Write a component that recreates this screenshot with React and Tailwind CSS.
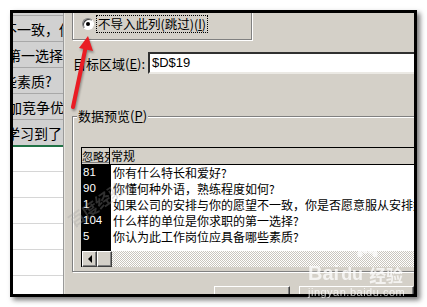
import React from "react";

const cjk = { fontFamily: '"Noto Sans CJK SC", "Noto Sans", sans-serif' };

const sheetRows = [
  { text: "不一致，你", cls: "-ml-[10px]" },
  { text: "第一选择", cls: "-ml-[6px]" },
  { text: "些素质?", cls: "-ml-[10px]" },
  { text: "加竞争优", cls: "-ml-[5px]" },
  { text: "学习到了", cls: "-ml-[7px]" },
];

const preview = [
  ["81", "你有什么特长和爱好?"],
  ["90", "你懂何种外语，熟练程度如何?"],
  ["1", "如果公司的安排与你的愿望不一致，你是否愿意服从安排好"],
  ["104", "什么样的单位是你求职的第一选择?"],
  ["5", "你认为此工作岗位应具备哪些素质?"],
];

const raised =
  "border border-t-white border-l-white border-b-[#404040] border-r-[#404040] bg-[#d4d0c8] shadow-[inset_-1px_-1px_0_#808080]";

export default function App() {
  return (
    <div className="relative w-[427px] h-[307px] bg-white overflow-hidden" style={cjk}>
      {/* Window frame */}
      <div className="ml-[10px] mt-[10px] w-[407px] h-[287px] border-[3px] border-black shadow-[3px_3px_5px_rgba(0,0,0,0.55)] flex overflow-hidden bg-[#d4d0c8]">
        {/* Sheet cells behind the dialog */}
        <div className="w-[50px] shrink-0 flex flex-col overflow-hidden bg-white text-[14px] text-black">
          <div className="h-[2px] shrink-0 bg-[#d1d1d1]" />
          {sheetRows.map((r) => (
            <div
              key={r.text}
              className="h-[26px] shrink-0 border-t border-[#a8a8a8] bg-[#d1d1d1] flex items-center overflow-hidden whitespace-nowrap leading-none"
            >
              <span className={r.cls}>{r.text}</span>
            </div>
          ))}
          <div className="h-[2px] shrink-0 bg-[#217346]" />
          <div className="h-[24px] shrink-0" />
          {[0, 1, 2, 3, 4].map((i) => (
            <div key={i} className="h-[26px] shrink-0 border-t border-[#d6d6d6]" />
          ))}
        </div>
        <div className="w-px shrink-0 bg-[#9a9a9a]" />
        <div className="w-px shrink-0 bg-[#e8e6e0]" />

        {/* Import dialog */}
        <div className="flex-1 flex flex-col overflow-hidden text-[13px] text-black">
          {/* column type group */}
          <div className="-mt-[5px] ml-[7px] w-[180px] h-[32px] shrink-0 border border-[#808080] shadow-[1px_1px_0_#fff,inset_1px_1px_0_#fff] flex items-center pl-[9px] gap-[2px]">
            <div className="w-[12px] h-[12px] rounded-full bg-white border border-[#808080] border-b-white border-r-white shadow-[inset_1px_1px_0_#404040] flex items-center justify-center">
              <div className="w-[4px] h-[4px] rounded-full bg-black" />
            </div>
            <span className="border border-dotted border-black px-[1px] h-[18px] flex items-center text-[12.5px] leading-none whitespace-nowrap">
              不导入此列(跳过)(<span className="underline">I</span>)
            </span>
          </div>

          {/* destination */}
          <div className="mt-[12px] ml-[8px] flex items-center shrink-0">
            <span className="w-[75px] shrink-0 whitespace-nowrap leading-none">
              目标区域(<span className="underline">E</span>):
            </span>
            <div
              className="w-[300px] h-[22px] shrink-0 bg-white border-2 border-t-[#303030] border-l-[#303030] border-b-[#ebe9e4] border-r-[#ebe9e4] flex items-center pl-[2px] text-[13px]"
              style={{ fontFamily: '"Liberation Sans", Arial, sans-serif' }}
            >
              $D$19
            </div>
          </div>

          {/* data preview group */}
          <div className="relative mt-[42px] ml-[7px] w-[400px] h-[156px] shrink-0 border border-[#808080] shadow-[1px_1px_0_#fff,inset_1px_1px_0_#fff] pl-[8px] pt-[30px]">
            <span className="absolute left-[4px] -top-[9px] bg-[#d4d0c8] px-[1px] leading-[16px] whitespace-nowrap">
              数据预览(<span className="underline">P</span>)
            </span>
            <div className="border-l border-t border-black flex flex-col text-[12px] leading-none">
              <div className="h-[17px] flex border-b border-black bg-[#d4d0c8]">
                <div className="w-[28px] shrink-0 border-r border-black overflow-hidden whitespace-nowrap flex items-center text-[11px]">
                  <span className="underline decoration-[#808080]">忽略列</span>
                </div>
                <div className="pl-[1px] flex items-center">常规</div>
              </div>
              <div className="flex h-[86px]">
                <div className="w-[29px] shrink-0 bg-black text-white" style={{ fontFamily: '"Liberation Sans", Arial, sans-serif' }}>
                  {preview.map(([n]) => (
                    <div key={n} className="h-[16px] flex items-center pl-[1px] text-[11.5px]">
                      {n}
                    </div>
                  ))}
                </div>
                <div className="flex-1 bg-white pl-[2px] overflow-hidden">
                  {preview.map(([n, t]) => (
                    <div key={n} className="h-[16px] flex items-center whitespace-nowrap">
                      {t}
                    </div>
                  ))}
                </div>
              </div>
              <div className="h-[16px] flex">
                <div className={`w-[15px] ${raised} flex items-center justify-center`}>
                  <div className="w-0 h-0 border-y-[4px] border-y-transparent border-r-[4px] border-r-black" />
                </div>
                <div className={`w-[15px] ${raised}`} />
                <div className="flex-1 bg-[repeating-conic-gradient(#c9c5bd_0%_25%,#ffffff_0%_50%)] bg-[length:2px_2px]" />
              </div>
            </div>
          </div>

          {/* buttons, cut off by the frame */}
          <div className="mt-[14px] ml-[149px] flex gap-[9px] shrink-0">
            <div className={`w-[80px] h-[22px] ${raised}`} />
            <div className={`w-[120px] h-[22px] ${raised}`} />
          </div>
        </div>
      </div>

      {/* faint diagonal watermark */}
      <div className="absolute left-[64px] top-[196px] -rotate-[35deg] text-[16px] font-bold text-[#a0a0a0] opacity-30 whitespace-nowrap leading-none pointer-events-none">
        百度经验
      </div>

      {/* Baidu jingyan watermark */}
      <div className="absolute left-[308px] top-[247px] text-white opacity-75 leading-none pointer-events-none">
        <svg width="26" height="16" viewBox="0 0 26 16" className="absolute left-[46px] top-[0px]">
          <ellipse cx="6" cy="7" rx="2.6" ry="3.2" fill="#fff" />
          <ellipse cx="11" cy="3.5" rx="2.6" ry="3.2" fill="#fff" />
          <ellipse cx="16.5" cy="3.5" rx="2.6" ry="3.2" fill="#fff" />
          <ellipse cx="21" cy="7" rx="2.6" ry="3.2" fill="#fff" />
        </svg>
        <div className="mt-[16px] flex items-end gap-[2px]">
          <span className="text-[20px] font-bold" style={{ fontFamily: '"Liberation Sans", Arial, sans-serif' }}>
            Bai
          </span>
          <span className="text-[18px] font-bold" style={{ fontFamily: '"Liberation Sans", Arial, sans-serif' }}>
            du
          </span>
          <span className="text-[17px] font-bold ml-[4px]">经验</span>
        </div>
        <div className="mt-[4px] text-[11px] tracking-[0.5px]" style={{ fontFamily: '"Liberation Sans", Arial, sans-serif' }}>
          jingyan.baidu.com
        </div>
      </div>

      {/* red arrow */}
      <svg
        className="absolute left-0 top-0 pointer-events-none drop-shadow-[1px_2px_1px_rgba(0,0,0,0.35)]"
        width="427"
        height="307"
        viewBox="0 0 427 307"
      >
        <line x1="73" y1="107" x2="85.5" y2="48" stroke="#ea1c24" strokeWidth="4" strokeLinecap="round" />
        <polygon points="88,36 93,51 79,48" fill="#ea1c24" />
      </svg>
    </div>
  );
}
